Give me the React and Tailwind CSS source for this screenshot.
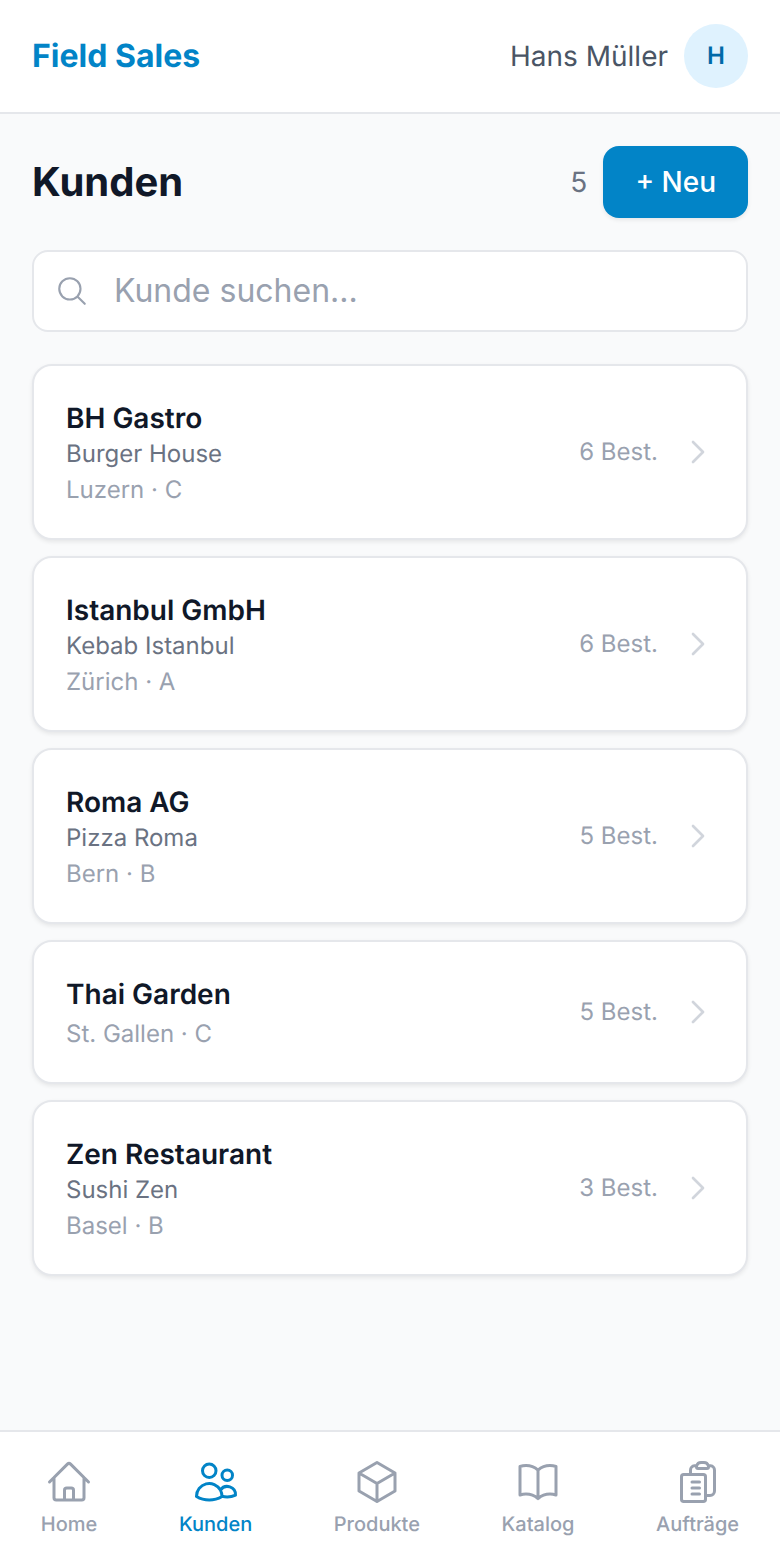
import React from "react";
import { HiOutlineHome, HiOutlineUsers, HiOutlineCube, HiOutlineBookOpen, HiOutlineMagnifyingGlass, HiOutlineChevronRight } from "react-icons/hi2";

const customers = [
  { name: "BH Gastro", sub: "Burger House", meta: "Luzern · C", orders: "6 Best." },
  { name: "Istanbul GmbH", sub: "Kebab Istanbul", meta: "Zürich · A", orders: "6 Best." },
  { name: "Roma AG", sub: "Pizza Roma", meta: "Bern · B", orders: "5 Best." },
  { name: "Thai Garden", meta: "St. Gallen · C", orders: "5 Best." },
  { name: "Zen Restaurant", sub: "Sushi Zen", meta: "Basel · B", orders: "3 Best." },
];

// clipboard with three plain lines, no bullets
const ClipboardIcon = ({ size }) => (
  <svg width={size} height={size} viewBox="0 0 24 24" fill="none" stroke="currentColor" strokeWidth={1.5} strokeLinecap="round" strokeLinejoin="round">
    <path d="M9 12h3.75M9 15h3.75M9 18h3.75m3 .75H18a2.25 2.25 0 0 0 2.25-2.25V6.108c0-1.135-.845-2.098-1.976-2.192a48.424 48.424 0 0 0-1.123-.08m-5.801 0c-.065.21-.1.433-.1.664 0 .414.336.75.75.75h4.5a.75.75 0 0 0 .75-.75 2.25 2.25 0 0 0-.1-.664m-5.8 0A2.251 2.251 0 0 1 13.5 2.25H15c1.012 0 1.867.668 2.15 1.586m-5.8 0c-.376.023-.75.05-1.124.08C9.095 4.01 8.25 4.973 8.25 6.108V8.25m0 0H4.875c-.621 0-1.125.504-1.125 1.125v11.25c0 .621.504 1.125 1.125 1.125h9.75c.621 0 1.125-.504 1.125-1.125V9.375c0-.621-.504-1.125-1.125-1.125H8.25Z" />
  </svg>
);

const navItems = [
  { label: "Home", icon: HiOutlineHome },
  { label: "Kunden", icon: HiOutlineUsers, active: true },
  { label: "Produkte", icon: HiOutlineCube },
  { label: "Katalog", icon: HiOutlineBookOpen },
  { label: "Aufträge", icon: ClipboardIcon },
];

const CustomerCard = ({ name, sub, meta, orders }) => (
  <div className="flex items-center justify-between rounded-[20px] border-2 border-gray-200 bg-white px-8 shadow-[0_2px_4px_rgba(0,0,0,0.08)]">
    <div className="flex flex-col pt-[34px] pb-[30px]">
      <span className="text-[28px] leading-[36px] font-semibold text-gray-900">{name}</span>
      {sub && <span className="text-[24px] leading-[36px] text-gray-500">{sub}</span>}
      <span className={`text-[24px] leading-[36px] text-gray-400 ${sub ? "" : "mt-1"}`}>{meta}</span>
    </div>
    <div className="flex items-center gap-6">
      <span className="text-[24px] leading-[32px] text-gray-400">{orders}</span>
      <HiOutlineChevronRight className="text-gray-300" size={32} strokeWidth={2} />
    </div>
  </div>
);

export default function App() {
  return (
    <div className="flex min-h-screen flex-col bg-gray-50 font-['Inter',sans-serif] antialiased [text-rendering:geometricPrecision]">
      <header className="flex h-[114px] items-center justify-between border-b-2 border-gray-200 bg-white px-8">
        <span className="text-[32px] font-bold text-[#0284c7]">Field Sales</span>
        <div className="flex items-center gap-4">
          <span className="text-[28px] text-gray-600">Hans Müller</span>
          <div className="flex h-16 w-16 items-center justify-center rounded-full bg-sky-100 text-[24px] font-semibold text-sky-700">H</div>
        </div>
      </header>

      <main className="flex flex-1 flex-col p-8">
        <div className="flex items-center justify-between">
          <h1 className="text-[40px] font-bold text-gray-900">Kunden</h1>
          <div className="flex items-center gap-4">
            <span className="text-[28px] text-gray-500">5</span>
            <button className="h-[72px] rounded-2xl bg-[#0284c7] px-8 text-[28px] font-medium text-white shadow-[0_2px_4px_rgba(0,0,0,0.08)]">+ Neu</button>
          </div>
        </div>

        <div className="mt-8 flex h-[82px] items-center gap-[25px] rounded-2xl border-2 border-gray-200 bg-white px-[21px]">
          <HiOutlineMagnifyingGlass className="shrink-0 text-gray-400" size={34} />
          <input className="w-full bg-transparent text-[32px] text-gray-900 outline-none placeholder:text-gray-400" placeholder="Kunde suchen..." />
        </div>

        <div className="mt-8 flex flex-col gap-4">
          {customers.map((c) => (
            <CustomerCard key={c.name} {...c} />
          ))}
        </div>
      </main>

      <nav className="flex h-[130px] items-start justify-around border-t-2 border-gray-200 bg-white pt-[26px]">
        {navItems.map(({ label, icon: Icon, active }) => (
          <div key={label} className={`flex flex-col items-center gap-1 ${active ? "text-[#0284c7]" : "text-gray-400"}`}>
            <Icon size={48} />
            <span className="text-[20px] leading-[28px] font-medium">{label}</span>
          </div>
        ))}
      </nav>
    </div>
  );
}
